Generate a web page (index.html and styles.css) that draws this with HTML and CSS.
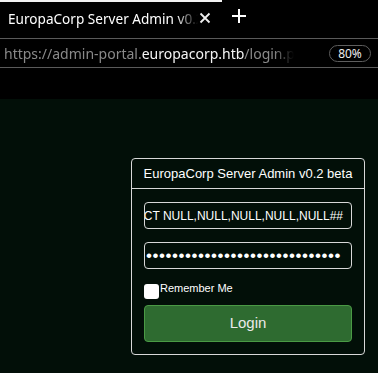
FILE: index.html
```html
<!DOCTYPE html>
<html lang="en">
<head>
  <meta charset="UTF-8">
  <title>EuropaCorp Server Admin v0.2 beta</title>
  <link rel="stylesheet" href="styles.css">
</head>
<body>

  <!-- Browser chrome -->
  <div class="tabbar">
    <div class="tab">
      <span class="tab-title">EuropaCorp Server Admin v0.2 beta</span>
      <svg class="tab-close" width="12" height="12" viewBox="0 0 12 12">
        <path d="M1.5 1.5 L10.5 10.5 M10.5 1.5 L1.5 10.5" stroke="#eee" stroke-width="1.8" fill="none"/>
      </svg>
    </div>
    <svg class="tab-new" width="14" height="14" viewBox="0 0 14 14">
      <path d="M7 0 V14 M0 7 H14" stroke="#fff" stroke-width="2" fill="none"/>
    </svg>
  </div>

  <div class="urlbar">
    <div class="url">https://admin-portal.<span class="host">europacorp.htb</span>/login.php</div>
    <div class="zoom">80%</div>
  </div>

  <div class="toolbar-gap"></div>

  <!-- Page -->
  <div class="page">
    <div class="panel">
      <div class="panel-heading">EuropaCorp Server Admin v0.2 beta</div>
      <div class="panel-body">
        <div class="field"><span>admin@europacorp.htb' UNION SELECT NULL,NULL,NULL,NULL,NULL##</span></div>
        <div class="field password"><span>&bull;&bull;&bull;&bull;&bull;&bull;&bull;&bull;&bull;&bull;&bull;&bull;&bull;&bull;&bull;&bull;&bull;&bull;&bull;&bull;&bull;&bull;&bull;&bull;&bull;&bull;&bull;&bull;&bull;&bull;</span></div>
        <label class="remember"><span class="checkbox"></span><span class="remember-text">Remember Me</span></label>
        <button class="login-btn">Login</button>
      </div>
    </div>
  </div>

</body>
</html>
```

FILE: styles.css
```css
body {
  margin: 0;
  padding: 0;
  background: #000;
  color: #fff;
  width: 378px;
  height: 373px;
  overflow: hidden;
}

/* Browser chrome */
.tabbar {
  height: 38px;
  display: flex;
  align-items: flex-start;
  font-family: "Noto Sans", sans-serif;
}

.tab {
  width: 222px;
  height: 34px;
  border-top: 2px solid #f2f2f2;
  display: flex;
  align-items: center;
  box-sizing: border-box;
  padding-left: 8px;
}

.tab-title {
  width: 190px;
  font-size: 13.6px;
  white-space: nowrap;
  overflow: hidden;
  -webkit-mask-image: linear-gradient(to right, #000 168px, transparent 190px);
  mask-image: linear-gradient(to right, #000 168px, transparent 190px);
}

.tab-close {
  margin-left: 1px;
}

.tab-new {
  margin: 9px 0 0 10px;
}

.urlbar {
  height: 28px;
  border-top: 1px solid #5a5a5a;
  border-bottom: 1px solid #5a5a5a;
  display: flex;
  align-items: center;
  justify-content: space-between;
  padding: 0 7px 0 4px;
  font-family: "Noto Sans", sans-serif;
}

.url {
  width: 290px;
  font-size: 14px;
  color: #8a8a8a;
  white-space: nowrap;
  overflow: hidden;
  -webkit-mask-image: linear-gradient(to right, #000 270px, transparent 290px);
  mask-image: linear-gradient(to right, #000 270px, transparent 290px);
}

.url .host {
  color: #f4f4f4;
}

.zoom {
  font-size: 12px;
  color: #eee;
  border: 1px solid #5e5e5e;
  border-radius: 9px;
  width: 42px;
  height: 17px;
  line-height: 16px;
  text-align: center;
  box-sizing: border-box;
}

.toolbar-gap {
  height: 31px;
}

/* Page */
.page {
  background: #020f08;
  height: 274px;
  padding: 59px 0 0 131px;
  box-sizing: border-box;
  font-family: "Liberation Sans", Arial, sans-serif;
}

.panel {
  width: 234px;
  border: 1px solid #d8d8d8;
  border-radius: 4px;
  box-sizing: border-box;
}

.panel-heading {
  height: 30px;
  border-bottom: 1px solid #d8d8d8;
  box-sizing: border-box;
  font-size: 13px;
  line-height: 29px;
  text-align: center;
}

.panel-body {
  padding: 13px 12px 12px;
  display: flex;
  flex-direction: column;
}

.field {
  height: 27px;
  border: 1px solid #d8d8d8;
  border-radius: 4px;
  box-sizing: border-box;
  display: flex;
  justify-content: flex-end;
  align-items: center;
  padding-right: 8px;
  overflow: hidden;
  white-space: nowrap;
  font-size: 12px;
  margin-bottom: 13px;
}

.field.password {
  justify-content: flex-start;
  padding-left: 1px;
  font-size: 17px;
  letter-spacing: 0.55px;
  margin-bottom: 15px;
}

.remember {
  display: flex;
  align-items: flex-start;
  font-size: 11px;
  line-height: 12px;
  height: 21px;
}

.checkbox {
  width: 15px;
  height: 15px;
  background: #fff;
  border-radius: 3px;
  margin-right: 1px;
}

.remember-text {
  margin-top: -2px;
}

.login-btn {
  height: 37px;
  background: #2e6b30;
  border: 1px solid #4a9a45;
  border-radius: 4px;
  color: #eaeaea;
  font-family: "Liberation Sans", Arial, sans-serif;
  font-size: 15px;
  padding: 0 0 3px;
}
```
